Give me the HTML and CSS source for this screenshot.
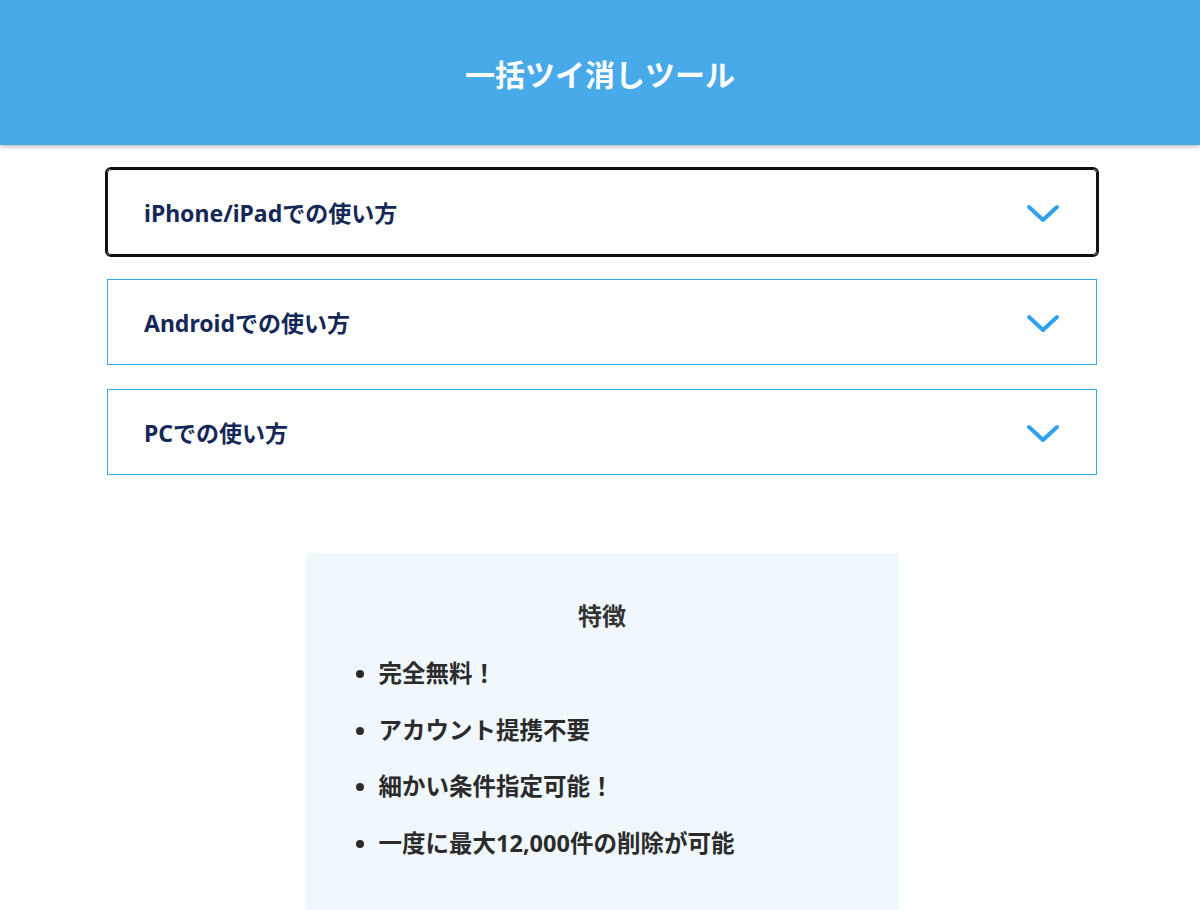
FILE: index.html
```html
<!DOCTYPE html>
<html lang="ja">
<head>
  <meta charset="UTF-8" />
  <meta name="viewport" content="width=device-width, initial-scale=1" />
  <title>一括ツイ消しツール</title>
  <link rel="stylesheet" href="styles.css">
</head>
<body>
  <header class="topbar">
    <h1>一括ツイ消しツール</h1>
  </header>

  <div class="howto">
    <div class="howto-item is-focused">
      <span class="howto-title">iPhone/iPadでの使い方</span>
      <svg class="chevron" width="34" height="20" viewBox="0 0 34 20"><path d="M3 3 L17 16 L31 3" fill="none" stroke="#2fa2ee" stroke-width="4" stroke-linecap="round" stroke-linejoin="round"/></svg>
    </div>
    <div class="howto-item">
      <span class="howto-title">Androidでの使い方</span>
      <svg class="chevron" width="34" height="20" viewBox="0 0 34 20"><path d="M3 3 L17 16 L31 3" fill="none" stroke="#2fa2ee" stroke-width="4" stroke-linecap="round" stroke-linejoin="round"/></svg>
    </div>
    <div class="howto-item">
      <span class="howto-title">PCでの使い方</span>
      <svg class="chevron" width="34" height="20" viewBox="0 0 34 20"><path d="M3 3 L17 16 L31 3" fill="none" stroke="#2fa2ee" stroke-width="4" stroke-linecap="round" stroke-linejoin="round"/></svg>
    </div>
  </div>

  <section class="features">
    <h2>特徴</h2>
    <ul>
      <li>完全無料！</li>
      <li>アカウント提携不要</li>
      <li>細かい条件指定可能！</li>
      <li>一度に最大12,000件の削除が可能</li>
    </ul>
  </section>
</body>
</html>
```

FILE: styles.css
```css
body {
  font-family: 'Noto Sans', 'Noto Sans CJK JP', sans-serif;
  margin: 0;
  padding: 0;
  background: #ffffff;
  color: #333;
}
.topbar {
  background-color: #48aae8;
  height: 145px;
  display: flex;
  align-items: center;
  justify-content: center;
  box-shadow: 0 2px 4px rgba(0, 0, 0, 0.25);
}
.topbar h1 {
  margin: 0;
  color: #ffffff;
  font-size: 30px;
  font-weight: bold;
}
.howto {
  width: 990px;
  margin: 24px auto 0;
  padding-left: 4px;
  display: flex;
  flex-direction: column;
  gap: 24px;
}
.howto-item {
  height: 86px;
  box-sizing: border-box;
  border: 1px solid #34a7f2;
  padding: 0 36px;
  display: flex;
  align-items: center;
  justify-content: space-between;
  background: #fff;
}
.howto-item.is-focused {
  border-color: #111;
  outline: 2px solid #111;
  outline-offset: 0;
  border-radius: 4px;
}
.howto-title {
  font-size: 23px;
  font-weight: bold;
  color: #142858;
}
.chevron {
  margin-top: 4px;
}
.features {
  width: 593px;
  margin: 78px auto 0;
  padding: 47px 0 40px;
  background: #f0f8fe;
  box-sizing: border-box;
  position: relative;
  left: 2px;
}
.features h2 {
  margin: 0;
  text-align: center;
  font-size: 24px;
  line-height: 32px;
  color: #333;
}
.features ul {
  margin: 25px 0 0;
  padding-left: 73px;
}
.features li {
  font-size: 23.5px;
  font-weight: bold;
  line-height: 32px;
  margin-bottom: 24.5px;
  color: #2b2b2b;
}
```
